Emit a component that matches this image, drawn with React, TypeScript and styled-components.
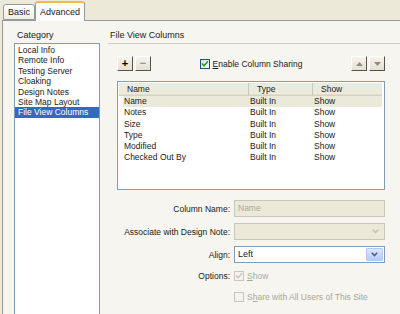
import React from 'react';
import styled, { createGlobalStyle } from 'styled-components';

const categories = ['Local Info', 'Remote Info', 'Testing Server', 'Cloaking', 'Design Notes', 'Site Map Layout', 'File View Columns'];
const columns = [
  ['Name', 'Built In', 'Show'],
  ['Notes', 'Built In', 'Show'],
  ['Size', 'Built In', 'Show'],
  ['Type', 'Built In', 'Show'],
  ['Modified', 'Built In', 'Show'],
  ['Checked Out By', 'Built In', 'Show'],
];

const Global = createGlobalStyle`
  body {
    margin: 0;
    font-family: "Liberation Sans", Arial, sans-serif;
    font-size: 8.5px;
    color: #1a1a1a;
  }
`;

const Window = styled.div`
  width: 400px;
  height: 314px;
  overflow: hidden;
  background: #ece9d8;
  display: flex;
  flex-direction: column;
`;

const TabStrip = styled.div`
  height: 20px;
  display: flex;
  align-items: flex-end;
  padding-left: 3px;
`;

const Tab = styled.div<{ $active?: boolean }>`
  height: ${p => (p.$active ? 20 : 16)}px;
  padding: 0 ${p => (p.$active ? 4 : 4)}px;
  box-sizing: border-box;
  display: flex;
  align-items: center;
  font-size: 9px;
  background: ${p => (p.$active ? '#fcfcfe' : 'linear-gradient(#fefefe, #f0efe6)')};
  border: 1px solid #919b9c;
  border-bottom: ${p => (p.$active ? 'none' : '1px solid #919b9c')};
  border-top: ${p => (p.$active ? '2px solid #f5b94a' : '1px solid #919b9c')};
  border-radius: 3px 3px 0 0;
  margin-bottom: ${p => (p.$active ? -1 : 0)}px;
  position: relative;
  z-index: ${p => (p.$active ? 1 : 0)};
`;

const Panel = styled.div`
  flex: 1;
  margin-left: 2px;
  border: 1px solid #919b9c;
  border-right: none;
  border-bottom: none;
  background: #f6f5f0;
  display: flex;
  padding: 8px 0 0 11px;
  min-height: 0;
`;

const LeftCol = styled.div`
  width: 86px;
  display: flex;
  flex-direction: column;
`;

const Caption = styled.div`
  height: 14px;
  padding-left: 3px;
  font-size: 9px;
  line-height: 12px;
`;

const ListBox = styled.div`
  flex: 1;
  background: #fff;
  border: 1px solid #7f9db9;
  border-bottom: none;
  padding-top: 1px;
`;

const ListItem = styled.div<{ $selected?: boolean }>`
  height: 10.4px;
  line-height: 10.4px;
  padding-left: 3px;
  white-space: nowrap;
  background: ${p => (p.$selected ? '#316ac5' : 'transparent')};
  color: ${p => (p.$selected ? '#fff' : '#1a1a1a')};
`;

const RightCol = styled.div`
  flex: 1;
  margin-left: 8px;
  display: flex;
  flex-direction: column;
`;

const SectionTitle = styled.div`
  height: 14px;
  padding-left: 2px;
  font-size: 9px;
  line-height: 12px;
  border-bottom: 1px solid #d6c8c4;
`;

const Content = styled.div`
  width: 268px;
  padding-left: 9px;
  display: flex;
  flex-direction: column;
`;

const Toolbar = styled.div`
  margin-top: 12px;
  height: 15px;
  display: flex;
  align-items: center;
`;

const ButtonGroup = styled.div`
  display: flex;
  gap: 2px;
`;

const ToolButton = styled.div<{ $disabled?: boolean }>`
  width: 16px;
  height: 15px;
  box-sizing: border-box;
  background: linear-gradient(#f6f5ee, #e4e1d2);
  border-right: 1px solid #55534a;
  border-bottom: 1px solid #55534a;
  border-top: 1px solid #fff;
  border-left: 1px solid #fff;
  display: flex;
  align-items: center;
  justify-content: center;
  color: ${p => (p.$disabled ? '#9a988e' : '#000')};
  font-weight: bold;
  font-size: 11px;
  line-height: 1;
`;

const CheckLabel = styled.label<{ $disabled?: boolean }>`
  display: flex;
  align-items: center;
  gap: 3px;
  color: ${p => (p.$disabled ? '#a8a79f' : '#1a1a1a')};
  white-space: nowrap;
`;

const CheckBox = styled.span<{ $disabled?: boolean }>`
  width: 10px;
  height: 10px;
  box-sizing: border-box;
  border: 1px solid ${p => (p.$disabled ? '#c9c7ba' : '#1c5180')};
  background: ${p => (p.$disabled ? '#f4f3ee' : 'linear-gradient(135deg, #dcdcd6, #fff)')};
  display: flex;
  align-items: center;
  justify-content: center;
`;

const Spacer = styled.div`
  flex: 1;
`;

const ListView = styled.div`
  margin-top: 10px;
  height: 109px;
  box-sizing: border-box;
  background: #fff;
  border: 1px solid #7f9db9;
  padding: 1px 2px 0 1px;
`;

const HeaderRow = styled.div`
  display: grid;
  grid-template-columns: 130px 64px 1fr;
  height: 12px;
  background: #ebeadb;
  border-bottom: 1px solid #d6d2c2;
  box-shadow: inset 0 -1px 0 #e2dfd0;
`;

const HeaderCell = styled.div<{ $last?: boolean }>`
  padding-left: 8px;
  line-height: 12px;
  border-right: ${p => (p.$last ? 'none' : '1px solid #cbc7b8')};
`;

const Row = styled.div<{ $selected?: boolean }>`
  display: grid;
  grid-template-columns: 130px 64px 1fr;
  height: 11.3px;
  line-height: 11.3px;
  margin-left: 4px;
  background: ${p => (p.$selected ? '#ebe9da' : 'transparent')};
`;

const Cell = styled.div<{ $first?: boolean }>`
  padding-left: 1px;
  margin-left: ${p => (p.$first ? 0 : -4)}px;
  white-space: nowrap;
`;

const Form = styled.div`
  margin-top: 10px;
  display: grid;
  grid-template-columns: 113px 151px;
  column-gap: 4px;
  row-gap: 6px;
  align-items: center;
`;

const FieldLabel = styled.div`
  text-align: right;
  white-space: nowrap;
`;

const TextField = styled.div`
  height: 17px;
  box-sizing: border-box;
  border: 1px solid #c9c7ba;
  background: #ece9d8;
  color: #aca899;
  padding-left: 3px;
  line-height: 15px;
`;

const Select = styled.div<{ $disabled?: boolean }>`
  height: 17px;
  box-sizing: border-box;
  border: 1px solid ${p => (p.$disabled ? '#c9c7ba' : '#7f9db9')};
  background: ${p => (p.$disabled ? '#ece9d8' : '#fff')};
  display: flex;
  align-items: stretch;
  padding: 1px;
`;

const SelectText = styled.div`
  flex: 1;
  padding-left: 2px;
  line-height: 13px;
  font-size: 9px;
`;

const DropButton = styled.div<{ $disabled?: boolean }>`
  width: 15px;
  display: flex;
  align-items: center;
  justify-content: center;
  background: ${p => (p.$disabled ? 'transparent' : 'linear-gradient(#dbe6fc, #b6cbf7)')};
  border-radius: 1px;
  ${p => (p.$disabled ? '' : 'border: 1px solid #b4c8f6;')}
`;

const OptionsRow = styled.div<{ $push?: number }>`
  height: 12px;
  display: flex;
  align-items: center;
  margin-top: ${p => p.$push ?? 0}px;
`;

const Check = ({ color }: { color: string }) => (
  <svg width="8" height="8" viewBox="0 0 8 8">
    <path d="M1 3.5 L3 5.7 L7 1.3" fill="none" stroke={color} strokeWidth="1.6" />
  </svg>
);

const Chevron = ({ color }: { color: string }) => (
  <svg width="7" height="5" viewBox="0 0 7 5">
    <path d="M0.8 0.8 L3.5 3.6 L6.2 0.8" fill="none" stroke={color} strokeWidth="1.5" />
  </svg>
);

const Triangle = ({ up }: { up?: boolean }) => (
  <svg width="7" height="4" viewBox="0 0 7 4">
    <path d={up ? 'M0 4 L3.5 0 L7 4 Z' : 'M0 0 L3.5 4 L7 0 Z'} fill="#8e8c82" />
  </svg>
);

export default function App() {
  return (
    <Window>
      <Global />
      <TabStrip>
        <Tab>Basic</Tab>
        <Tab $active>Advanced</Tab>
      </TabStrip>
      <Panel>
        <LeftCol>
          <Caption>Category</Caption>
          <ListBox>
            {categories.map((c, i) => (
              <ListItem key={c} $selected={i === categories.length - 1}>{c}</ListItem>
            ))}
          </ListBox>
        </LeftCol>
        <RightCol>
          <SectionTitle>File View Columns</SectionTitle>
          <Content>
            <Toolbar>
              <ButtonGroup>
                <ToolButton>+</ToolButton>
                <ToolButton $disabled>−</ToolButton>
              </ButtonGroup>
              <Spacer />
              <CheckLabel>
                <CheckBox><Check color="#21a121" /></CheckBox>
                <span><u>E</u>nable Column Sharing</span>
              </CheckLabel>
              <Spacer />
              <ButtonGroup>
                <ToolButton><Triangle up /></ToolButton>
                <ToolButton><Triangle /></ToolButton>
              </ButtonGroup>
            </Toolbar>
            <ListView>
              <HeaderRow>
                <HeaderCell>Name</HeaderCell>
                <HeaderCell>Type</HeaderCell>
                <HeaderCell $last>Show</HeaderCell>
              </HeaderRow>
              {columns.map((r, i) => (
                <Row key={r[0]} $selected={i === 0}>
                  <Cell $first>{r[0]}</Cell>
                  <Cell>{r[1]}</Cell>
                  <Cell>{r[2]}</Cell>
                </Row>
              ))}
            </ListView>
            <Form>
              <FieldLabel>Column Name:</FieldLabel>
              <TextField>Name</TextField>
              <FieldLabel>Associate with Design Note:</FieldLabel>
              <Select $disabled>
                <SelectText />
                <DropButton $disabled><Chevron color="#c4c2b6" /></DropButton>
              </Select>
              <FieldLabel>Align:</FieldLabel>
              <Select>
                <SelectText>Left</SelectText>
                <DropButton><Chevron color="#4d6185" /></DropButton>
              </Select>
              <FieldLabel>Options:</FieldLabel>
              <OptionsRow $push={1}>
                <CheckLabel $disabled>
                  <CheckBox $disabled><Check color="#c9c7ba" /></CheckBox>
                  <span><u>S</u>how</span>
                </CheckLabel>
              </OptionsRow>
              <div />
              <OptionsRow $push={3}>
                <CheckLabel $disabled>
                  <CheckBox $disabled />
                  <span>S<u>h</u>are with All Users of This Site</span>
                </CheckLabel>
              </OptionsRow>
            </Form>
          </Content>
        </RightCol>
      </Panel>
    </Window>
  );
}
